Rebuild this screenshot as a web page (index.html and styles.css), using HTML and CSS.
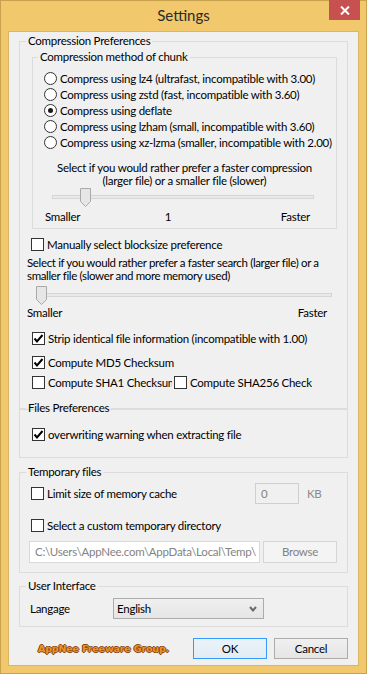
FILE: index.html
```html
<!DOCTYPE html>
<html lang="en">
<head>
    <meta charset="UTF-8">
    <meta name="viewport" content="width=device-width, initial-scale=1.0">
    <title>Settings</title>
    <link rel="stylesheet" href="styles.css">
</head>
<body>
    <div class="window">
        <div class="titlebar">
            <span></span>
            <span class="title">Settings</span>
            <div class="close-btn">
                <svg width="10" height="9" viewBox="0 0 10 9"><path d="M1 0.5 L9 8.5 M9 0.5 L1 8.5" stroke="#fff" stroke-width="2"/></svg>
            </div>
        </div>

        <div class="client">
            <!-- Compression -->
            <fieldset class="group group-compression">
                <legend>Compression Preferences</legend>

                <fieldset class="group group-method">
                    <legend>Compression method of chunk</legend>
                    <div class="radio-list">
                        <label class="option"><span class="radio"></span>Compress using lz4 (ultrafast, incompatible with 3.00)</label>
                        <label class="option"><span class="radio"></span>Compress using zstd (fast, incompatible with 3.60)</label>
                        <label class="option"><span class="radio checked"></span>Compress using deflate</label>
                        <label class="option"><span class="radio"></span>Compress using lzham (small, incompatible with 3.60)</label>
                        <label class="option"><span class="radio"></span>Compress using xz-lzma (smaller, incompatible with 2.00)</label>
                    </div>
                    <p class="desc desc-center">Select if you would rather prefer a faster compression<br>(larger file) or a smaller file (slower)</p>
                    <div class="slider slider-method">
                        <div class="track"></div>
                        <svg class="thumb" style="left: 28px" width="11" height="19" viewBox="0 0 11 19"><path d="M0.5 0.5 H10.5 V13.5 L5.5 18.5 L0.5 13.5 Z" fill="#e6e6e6" stroke="#a9a9a9"/></svg>
                    </div>
                    <div class="scale scale-method">
                        <span>Smaller</span>
                        <span class="scale-mid">1</span>
                        <span class="scale-end">Faster</span>
                    </div>
                </fieldset>

                <label class="option row-block"><span class="check"></span>Manually select blocksize preference</label>
                <p class="desc desc-search">Select if you would rather prefer a faster search (larger file) or a<br>smaller file (slower and more memory used)</p>
                <div class="slider slider-search">
                    <div class="track"></div>
                    <svg class="thumb" style="left: 0px" width="11" height="19" viewBox="0 0 11 19"><path d="M0.5 0.5 H10.5 V13.5 L5.5 18.5 L0.5 13.5 Z" fill="#e6e6e6" stroke="#a9a9a9"/></svg>
                </div>
                <div class="scale scale-search">
                    <span>Smaller</span>
                    <span class="scale-end">Faster</span>
                </div>

                <label class="option row-strip"><span class="check checked"><svg width="11" height="11" viewBox="0 0 11 11"><path d="M1.5 5.5 L4 8.5 L9.5 2" fill="none" stroke="#000" stroke-width="2"/></svg></span>Strip identical file information (incompatible with 1.00)</label>
                <label class="option row-md5"><span class="check checked"><svg width="11" height="11" viewBox="0 0 11 11"><path d="M1.5 5.5 L4 8.5 L9.5 2" fill="none" stroke="#000" stroke-width="2"/></svg></span>Compute MD5 Checksum</label>
                <div class="row-sha">
                    <label class="option sha1"><span class="check"></span>Compute SHA1 Checksum</label>
                    <label class="option sha256"><span class="check"></span>Compute SHA256 Checksum</label>
                </div>
            </fieldset>

            <!-- Files -->
            <fieldset class="group group-files">
                <legend>Files Preferences</legend>
                <label class="option row-overwrite"><span class="check checked"><svg width="11" height="11" viewBox="0 0 11 11"><path d="M1.5 5.5 L4 8.5 L9.5 2" fill="none" stroke="#000" stroke-width="2"/></svg></span>overwriting warning when extracting file</label>
            </fieldset>

            <!-- Temporary -->
            <fieldset class="group group-temp">
                <legend>Temporary files</legend>
                <div class="row-cache">
                    <label class="option cache-label"><span class="check"></span>Limit size of memory cache</label>
                    <div class="input input-cache">0</div>
                    <span class="unit">KB</span>
                </div>
                <label class="option row-dir"><span class="check"></span>Select a custom temporary directory</label>
                <div class="row-path">
                    <div class="input input-path">C:\Users\AppNee.com\AppData\Local\Temp\</div>
                    <div class="button button-disabled">Browse</div>
                </div>
            </fieldset>

            <!-- Interface -->
            <fieldset class="group group-ui">
                <legend>User Interface</legend>
                <div class="row-lang">
                    <span class="lang-label">Langage</span>
                    <div class="select">
                        <span>English</span>
                        <svg width="8" height="6" viewBox="0 0 8 6"><path d="M1 1 L4 4.5 L7 1" fill="none" stroke="#6a6a6a" stroke-width="2"/></svg>
                    </div>
                </div>
            </fieldset>

            <div class="footer">
                <span class="brand">AppNee Freeware Group.</span>
                <div class="button button-default">OK</div>
                <div class="button">Cancel</div>
            </div>
        </div>
    </div>
</body>
</html>
```

FILE: styles.css
```css
body {
    margin: 0;
    font-family: "Segoe UI", Lato, sans-serif;
    font-size: 11.5px;
    letter-spacing: -0.25px;
    color: #000;
}
.window {
    width: 367px;
    height: 674px;
    box-sizing: border-box;
    background-color: #f1c86b;
    border: 1px solid #c9a24f;
}
.titlebar {
    height: 30px;
    display: grid;
    grid-template-columns: 1fr auto 1fr;
}
.title {
    font-size: 15px;
    letter-spacing: 0;
    line-height: 29px;
    color: #2a2a2a;
}
.close-btn {
    justify-self: end;
    width: 31px;
    height: 20px;
    margin-right: 6px;
    margin-top: -1px;
    background-color: #c75050;
    display: flex;
    justify-content: center;
    align-items: center;
}
.client {
    height: 635px;
    margin: 0 7px;
    box-sizing: border-box;
    border: 1px solid #d9b566;
    background-color: #f0f0f0;
    padding: 0 10px;
}
.group {
    margin: 0;
    padding: 0;
    border: 1px solid #dcdcdc;
    min-width: 0;
}
.group legend {
    padding: 0 2px;
    margin-left: 6px;
    line-height: 16px;
}
.group-compression {
    margin-top: 1px;
    padding-bottom: 19px;
}
.group-method {
    margin: 0 10px 0 12px;
    padding-bottom: 4px;
}
.group-method legend {
    margin-left: 5px;
}
.radio-list {
    padding: 5px 0 0 11px;
}
.option {
    display: flex;
    align-items: center;
    height: 16px;
    white-space: nowrap;
}
.radio {
    width: 13px;
    height: 13px;
    box-sizing: border-box;
    border: 1px solid #333;
    border-radius: 50%;
    background: #fff;
    margin-right: 3px;
    display: flex;
    justify-content: center;
    align-items: center;
    flex-shrink: 0;
}
.radio.checked::after {
    content: "";
    width: 5px;
    height: 5px;
    border-radius: 50%;
    background: #1a1a1a;
}
.check {
    width: 13px;
    height: 13px;
    box-sizing: border-box;
    border: 1px solid #333;
    background: #fff;
    margin-right: 3px;
    display: flex;
    justify-content: center;
    align-items: center;
    flex-shrink: 0;
}
.desc {
    margin: 0;
    line-height: 13px;
    white-space: nowrap;
}
.desc-center {
    margin-top: 11px;
    text-align: center;
}
.slider {
    position: relative;
    height: 20px;
}
.track {
    position: relative;
    top: 7px;
    height: 4px;
    box-sizing: border-box;
    background: #e7eaea;
    border: 1px solid #d6d6d6;
}
.thumb {
    position: absolute;
    top: 0;
}
.slider-method {
    margin: 1px 0 0 19px;
    width: 262px;
}
.scale {
    display: grid;
    line-height: 14px;
}
.scale-method {
    margin: 2px 0 0 12px;
    width: 265px;
    grid-template-columns: 118px 10px 1fr;
}
.scale-mid {
    text-align: center;
}
.scale-end {
    text-align: right;
}
.row-block {
    margin: 7px 0 0 11px;
}
.desc-search {
    margin-top: 4px;
    padding-left: 7px;
    letter-spacing: -0.35px;
}
.slider-search {
    margin: 4px 0 0 16px;
    width: 296px;
}
.scale-search {
    margin: 0 20px 0 7px;
    grid-template-columns: 1fr 1fr;
}
.row-strip {
    margin: 10px 0 0 12px;
}
.row-md5 {
    margin: 8px 0 0 12px;
}
.row-sha {
    display: flex;
    margin: 4px 0 0 12px;
}
.sha1 {
    width: 140px;
    overflow: hidden;
}
.sha256 {
    width: 138px;
    margin-left: 2px;
    overflow: hidden;
}
.group-files {
    margin-top: -10px;
    padding-bottom: 15px;
}
.row-overwrite {
    margin: 10px 0 0 12px;
}
.group-temp {
    margin-top: 6px;
    padding-bottom: 9px;
}
.row-cache {
    display: flex;
    align-items: center;
    height: 22px;
    margin: 2px 0 0 11px;
}
.cache-label {
    width: 224px;
}
.input {
    box-sizing: border-box;
    height: 21px;
    line-height: 19px;
    border: 1px solid #cfcfcf;
    color: #838383;
    padding-left: 5px;
    white-space: nowrap;
    overflow: hidden;
}
.input-cache {
    width: 44px;
    background: #f0f0f0;
}
.unit {
    margin-left: 8px;
    color: #8a8a8a;
}
.row-dir {
    margin: 13px 0 0 11px;
}
.row-path {
    display: flex;
    gap: 3px;
    margin: 8px 0 0 9px;
}
.input-path {
    width: 231px;
    height: 22px;
    line-height: 20px;
    background: #fff;
    border-color: #d9d9d9;
}
.button {
    box-sizing: border-box;
    width: 74px;
    height: 21px;
    line-height: 19px;
    text-align: center;
    border: 1px solid #acacac;
    background: linear-gradient(#f0f0f0, #e5e5e5);
}
.button-disabled {
    height: 22px;
    line-height: 20px;
    background: #f4f4f4;
    border-color: #d5d5d5;
    color: #838383;
}
.button-default {
    border-color: #3399ff;
    background: linear-gradient(#eaf3fb, #e3ebf3);
}
.group-ui {
    margin-top: 5px;
    padding-bottom: 7px;
}
.row-lang {
    display: flex;
    align-items: center;
    margin: 4px 0 0 10px;
}
.lang-label {
    width: 83px;
}
.select {
    box-sizing: border-box;
    width: 151px;
    height: 21px;
    border: 1px solid #acacac;
    background: linear-gradient(#f0f0f0, #e5e5e5);
    display: flex;
    align-items: center;
    justify-content: space-between;
    padding: 0 6px 0 3px;
}
.footer {
    display: flex;
    align-items: center;
    gap: 7px;
    margin-top: 11px;
}
.brand {
    flex: 1;
    padding-left: 19px;
    font-family: "DejaVu Sans", sans-serif;
    font-weight: bold;
    font-size: 9.5px;
    letter-spacing: -0.15px;
    color: #f0922a;
    text-shadow: 1px 0 0 #8a4b12, -1px 0 0 #8a4b12, 0 1px 0 #8a4b12, 0 -1px 0 #8a4b12;
    white-space: nowrap;
}
```
